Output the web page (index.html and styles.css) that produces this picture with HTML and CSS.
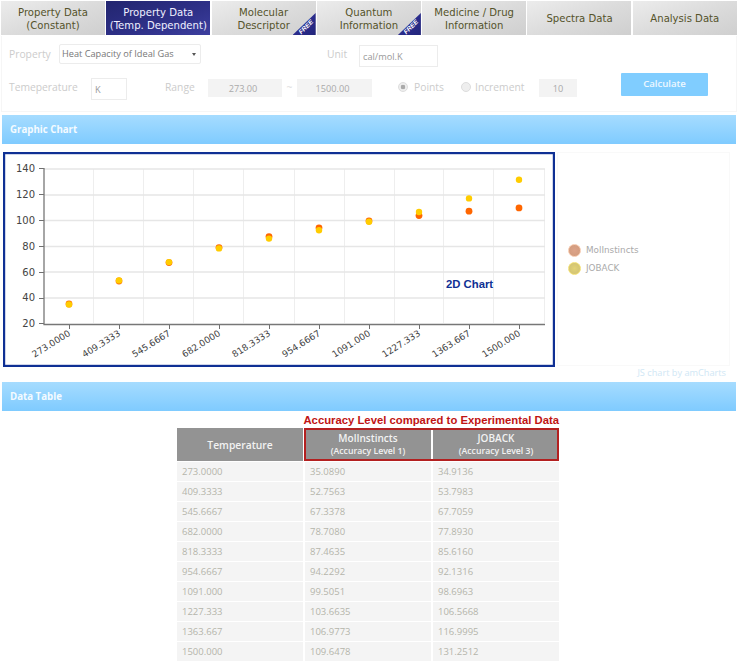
FILE: index.html
```html
<!DOCTYPE html>
<html lang="en">
<head>
<meta charset="utf-8">
<title>Property Data</title>
<link rel="stylesheet" href="styles.css">
</head>
<body>
<div class="page">
  <nav class="tabs">
    <div class="tab">Property Data<br>(Constant)</div>
    <div class="tab active">Property Data<br>(Temp. Dependent)</div>
    <div class="tab">Molecular<br>Descriptor<span class="ribbon"></span><span class="free">FREE</span></div>
    <div class="tab">Quantum<br>Information<span class="ribbon"></span><span class="free">FREE</span></div>
    <div class="tab">Medicine / Drug<br>Information</div>
    <div class="tab single">Spectra Data</div>
    <div class="tab single">Analysis Data</div>
  </nav>

  <section class="form">
    <div class="row row-one">
      <span class="label w-property">Property</span>
      <div class="select">Heat Capacity of Ideal Gas<span class="caret"></span></div>
      <span class="label w-unit">Unit</span>
      <div class="field unit">cal/mol.K</div>
    </div>
    <div class="row row-two">
      <span class="label w-temp">Temeperature</span>
      <div class="field kelvin">K</div>
      <span class="label w-range">Range</span>
      <div class="readonly r-from">273.00</div>
      <span class="tilde">~</span>
      <div class="readonly r-to">1500.00</div>
      <span class="radio checked r-points"></span>
      <span class="label w-points">Points</span>
      <span class="radio"></span>
      <span class="label w-inc">Increment</span>
      <div class="readonly r-count">10</div>
      <div class="button">Calculate</div>
    </div>
  </section>

  <h2 class="bar bar-chart">Graphic Chart</h2>

  <section class="chart-area">
    <svg class="chart" width="552" height="215" viewBox="3 152 552 215">
      <rect x="4" y="153" width="550" height="213" fill="#fff" stroke="#0f3094" stroke-width="2.4"/>
      <g stroke="#eeeeee" stroke-width="1">
        <path d="M93.5 169V323M143.5 169V323M193.5 169V323M243.5 169V323M294.5 169V323M344.5 169V323M394.5 169V323M443.5 169V323M493.5 169V323M544.5 169V323"/>
      </g>
      <g stroke="#e6e6e6" stroke-width="1.4">
        <path d="M44 169H545M44 195H545M44 220.5H545M44 246.5H545M44 272H545M44 298H545"/>
      </g>
      <g stroke="#6f6f6f" stroke-width="1" fill="none">
        <path d="M39 168.5H44M39 194.5H44M39 220.5H44M39 246.5H44M39 272.5H44M39 298.5H44M39 323.5H44"/>
        <path d="M69.5 324V329M119.5 324V329M169.5 324V329M219.5 324V329M269.5 324V329M319.5 324V329M369.5 324V329M419.5 324V329M469.5 324V329M519.5 324V329"/>
      </g>
      <path d="M44 168V324.5H545" fill="none" stroke="#777" stroke-width="1.3"/>
      <g class="axis y-axis">
        <text x="35" y="172">140</text>
        <text x="35" y="198">120</text>
        <text x="35" y="224">100</text>
        <text x="35" y="250">80</text>
        <text x="35" y="276">60</text>
        <text x="35" y="301">40</text>
        <text x="35" y="327">20</text>
      </g>
      <g class="axis x-axis">
        <text transform="translate(71 335) rotate(-32)">273.0000</text>
        <text transform="translate(121 335) rotate(-32)">409.3333</text>
        <text transform="translate(171 335) rotate(-32)">545.6667</text>
        <text transform="translate(221 335) rotate(-32)">682.0000</text>
        <text transform="translate(271 335) rotate(-32)">818.3333</text>
        <text transform="translate(321 335) rotate(-32)">954.6667</text>
        <text transform="translate(371 335) rotate(-32)">1091.000</text>
        <text transform="translate(421 335) rotate(-32)">1227.333</text>
        <text transform="translate(471 335) rotate(-32)">1363.667</text>
        <text transform="translate(521 335) rotate(-32)">1500.000</text>
      </g>
      <g fill="#ff6600">
        <circle cx="69" cy="304" r="3.4"/><circle cx="119" cy="281" r="3.4"/>
        <circle cx="169" cy="262.6" r="3.4"/><circle cx="219" cy="247.6" r="3.4"/>
        <circle cx="269" cy="236.6" r="3.4"/><circle cx="319" cy="227.8" r="3.4"/>
        <circle cx="369" cy="221" r="3.4"/><circle cx="419" cy="215.6" r="3.4"/>
        <circle cx="469" cy="211.2" r="3.4"/><circle cx="519" cy="207.9" r="3.4"/>
      </g>
      <g fill="#ffcc00">
        <circle cx="69" cy="304.4" r="3.2"/><circle cx="119" cy="280.4" r="3.2"/>
        <circle cx="169" cy="262.1" r="3.2"/><circle cx="219" cy="248.4" r="3.2"/>
        <circle cx="269" cy="238.6" r="3.2"/><circle cx="319" cy="230.3" r="3.2"/>
        <circle cx="369" cy="221.8" r="3.2"/><circle cx="419" cy="212" r="3.2"/>
        <circle cx="469" cy="198.4" r="3.2"/><circle cx="519" cy="179.7" r="3.2"/>
      </g>
      <text class="chart-note" x="446" y="288">2D Chart</text>
    </svg>
    <aside class="legend">
      <div class="legend-item"><span class="dot dot-mol"></span>MolInstincts</div>
      <div class="legend-item"><span class="dot dot-job"></span>JOBACK</div>
    </aside>
  </section>
  <div class="credit">JS chart by amCharts</div>

  <h2 class="bar bar-table">Data Table</h2>

  <section class="table-wrap">
    <div class="accuracy">Accuracy Level compared to Experimental Data</div>
    <div class="table-box">
      <table>
        <thead>
          <tr>
            <th class="temp">Temperature</th>
            <th>MolInstincts<small>(Accuracy Level 1)</small></th>
            <th>JOBACK<small>(Accuracy Level 3)</small></th>
          </tr>
        </thead>
        <tbody>
          <tr><td>273.0000</td><td>35.0890</td><td>34.9136</td></tr>
          <tr><td>409.3333</td><td>52.7563</td><td>53.7983</td></tr>
          <tr><td>545.6667</td><td>67.3378</td><td>67.7059</td></tr>
          <tr><td>682.0000</td><td>78.7080</td><td>77.8930</td></tr>
          <tr><td>818.3333</td><td>87.4635</td><td>85.6160</td></tr>
          <tr><td>954.6667</td><td>94.2292</td><td>92.1316</td></tr>
          <tr><td>1091.000</td><td>99.5051</td><td>98.6963</td></tr>
          <tr><td>1227.333</td><td>103.6635</td><td>106.5668</td></tr>
          <tr><td>1363.667</td><td>106.9773</td><td>116.9995</td></tr>
          <tr><td>1500.000</td><td>109.6478</td><td>131.2512</td></tr>
        </tbody>
      </table>
      <div class="accuracy-box"></div>
    </div>
  </section>
</div>
</body>
</html>
```
FILE: styles.css
```css
* { box-sizing: border-box; }
html, body { margin: 0; padding: 0; background: #fff; }
.page {
  width: 738px;
  height: 668px;
  overflow: hidden;
  font-family: "Open Sans", sans-serif;
  color: #ccc;
}

/* Tabs */
.tabs { display: flex; gap: 1.3px; padding: 1px 1px 0; }
.tab {
  position: relative;
  overflow: hidden;
  flex: 0 0 104px;
  height: 34px;
  padding-top: 6px;
  text-align: center;
  white-space: nowrap;
  font: 10.1px/12.7px "DejaVu Sans", sans-serif;
  color: #55532a;
  background: linear-gradient(160deg, #ececec 0%, #dcdcdc 50%, #cfcfcf 100%);
}
.tab.single { padding-top: 12px; }
.tab.active {
  color: #f0f0ff;
  background: linear-gradient(160deg, #22256f 0%, #2f3189 60%, #3d3f9f 100%);
}
.ribbon {
  position: absolute;
  right: 0;
  bottom: 0;
  width: 23px;
  height: 22px;
  background: linear-gradient(135deg, #3436a0, #22247a);
  clip-path: polygon(100% 0, 100% 100%, 0 100%);
}
.free {
  position: absolute;
  right: 0;
  bottom: 4px;
  width: 20px;
  font: italic bold 6.5px/8px "Liberation Sans", sans-serif;
  color: #fff;
  transform: rotate(-45deg);
}

/* Form */
.form {
  height: 76px;
  margin: 1px 1px 0;
  border: 1px solid #f6f6f6;
  border-top: 0;
  font-size: 10.3px;
}
.row { display: flex; align-items: center; }
.row-one { height: 35px; padding: 1px 0 0 7px; }
.row-two { height: 34px; margin-top: -1px; padding-left: 7px; }
.label { flex: none; }
.w-property { width: 50px; }
.w-unit { width: 32px; margin-left: 126px; }
.w-temp { width: 82px; }
.w-range { width: 43px; margin-left: 38px; }
.w-points { width: 47px; margin-left: 6px; }
.w-inc { width: 64px; margin-left: 4px; }
.select {
  position: relative;
  width: 142px;
  height: 20px;
  padding-left: 2px;
  border: 1px solid #ececec;
  border-radius: 2px;
  font-size: 9.2px;
  line-height: 18px;
  color: #777;
}
.caret {
  position: absolute;
  right: 4px;
  top: 8px;
  border: 2.2px solid transparent;
  border-top: 3px solid #555;
}
.field {
  height: 22px;
  padding-left: 3px;
  border: 1px solid #ececec;
  font-size: 9.2px;
  line-height: 21px;
  color: #999;
}
.unit { width: 79px; margin-top: 3px; }
.kelvin { width: 36px; margin-top: 3px; }
.readonly {
  flex: none;
  height: 18px;
  margin-top: 2px;
  background: #f3f3f3;
  padding-right: 4px;
  text-align: center;
  font-size: 9.2px;
  line-height: 20px;
  color: #aaa;
}
.r-from { width: 74px; }
.tilde { width: 15px; text-align: center; color: #ddd; }
.r-to { width: 75px; }
.r-count { width: 38px; padding-right: 0; }
.radio {
  flex: none;
  width: 10px;
  height: 10px;
  border: 1px solid #ddd;
  border-radius: 50%;
  background: #eee;
}
.r-points { margin-left: 26px; }
.checked { background: radial-gradient(circle, #aaa 0 2px, #eee 2.6px); }
.button {
  width: 87px;
  height: 23px;
  margin: -5px 0 0 44px;
  background: #80cdff;
  border-radius: 1px;
  color: #eef8ff;
  text-align: center;
  font-size: 9.6px;
  font-weight: 600;
  line-height: 22px;
}

/* Section bars */
.bar {
  width: 734px;
  height: 29px;
  margin: 0 0 0 2px;
  padding-left: 8px;
  background: linear-gradient(#a6dcff, #7fcbff);
  color: #f4fbff;
  font-size: 9.7px;
  font-weight: 700;
  line-height: 29px;
}
.bar-chart { margin-top: 3px; }

/* Chart */
.chart-area { display: flex; margin: 8px 0 0 3px; }
.chart { display: block; flex: none; }
.axis { font: 10px "DejaVu Sans", sans-serif; fill: #444; }
.y-axis { text-anchor: end; }
.x-axis { text-anchor: end; font-size: 9px; }
.chart-note { font: bold 11.3px "Liberation Sans", sans-serif; fill: #0f3094; }
.legend {
  width: 173px;
  height: 214px;
  margin-left: 2px;
  padding-left: 10px;
  border: 1px solid #f9f9f9;
  display: flex;
  flex-direction: column;
  justify-content: center;
  gap: 5px;
  font: 8.8px "DejaVu Sans", sans-serif;
  color: #aaa;
}
.legend-item { display: flex; align-items: center; gap: 5px; height: 13px; }
.dot { width: 13px; height: 13px; border-radius: 50%; }
.dot-mol { background: radial-gradient(circle, #dca388, #d09a7c); border: 1px solid #f6c8ac; }
.dot-job { background: radial-gradient(circle, #e2d276, #cdbf74); border: 1px solid #f3e174; }
.credit {
  height: 15px;
  padding-right: 12px;
  text-align: right;
  font-size: 9.2px;
  line-height: 12px;
  color: #d0e7f5;
}

/* Table */
.table-wrap { width: 386px; margin: 0 0 0 175px; }
.accuracy {
  height: 16px;
  padding-right: 2px;
  text-align: right;
  font: bold 11.3px/18px "Liberation Sans", sans-serif;
  color: #c01414;
}
.table-box { position: relative; }
table { border-collapse: separate; border-spacing: 2px 1px; table-layout: fixed; width: 386px; }
th {
  height: 33px;
  padding: 0;
  background: #939393;
  color: #f2f2f2;
  font-size: 10px;
  font-weight: 600;
  line-height: 14px;
}
th.temp { font-size: 10.3px; }
th small { display: block; font-size: 8.7px; line-height: 13px; }
td {
  height: 19px;
  padding: 1px 0 0 5px;
  background: #f4f4f4;
  color: #b5b5ab;
  font-size: 9.5px;
  line-height: 18px;
}
.accuracy-box {
  position: absolute;
  left: 129px;
  top: 1px;
  width: 255px;
  height: 33px;
  border: 2px solid #b32020;
}
```
